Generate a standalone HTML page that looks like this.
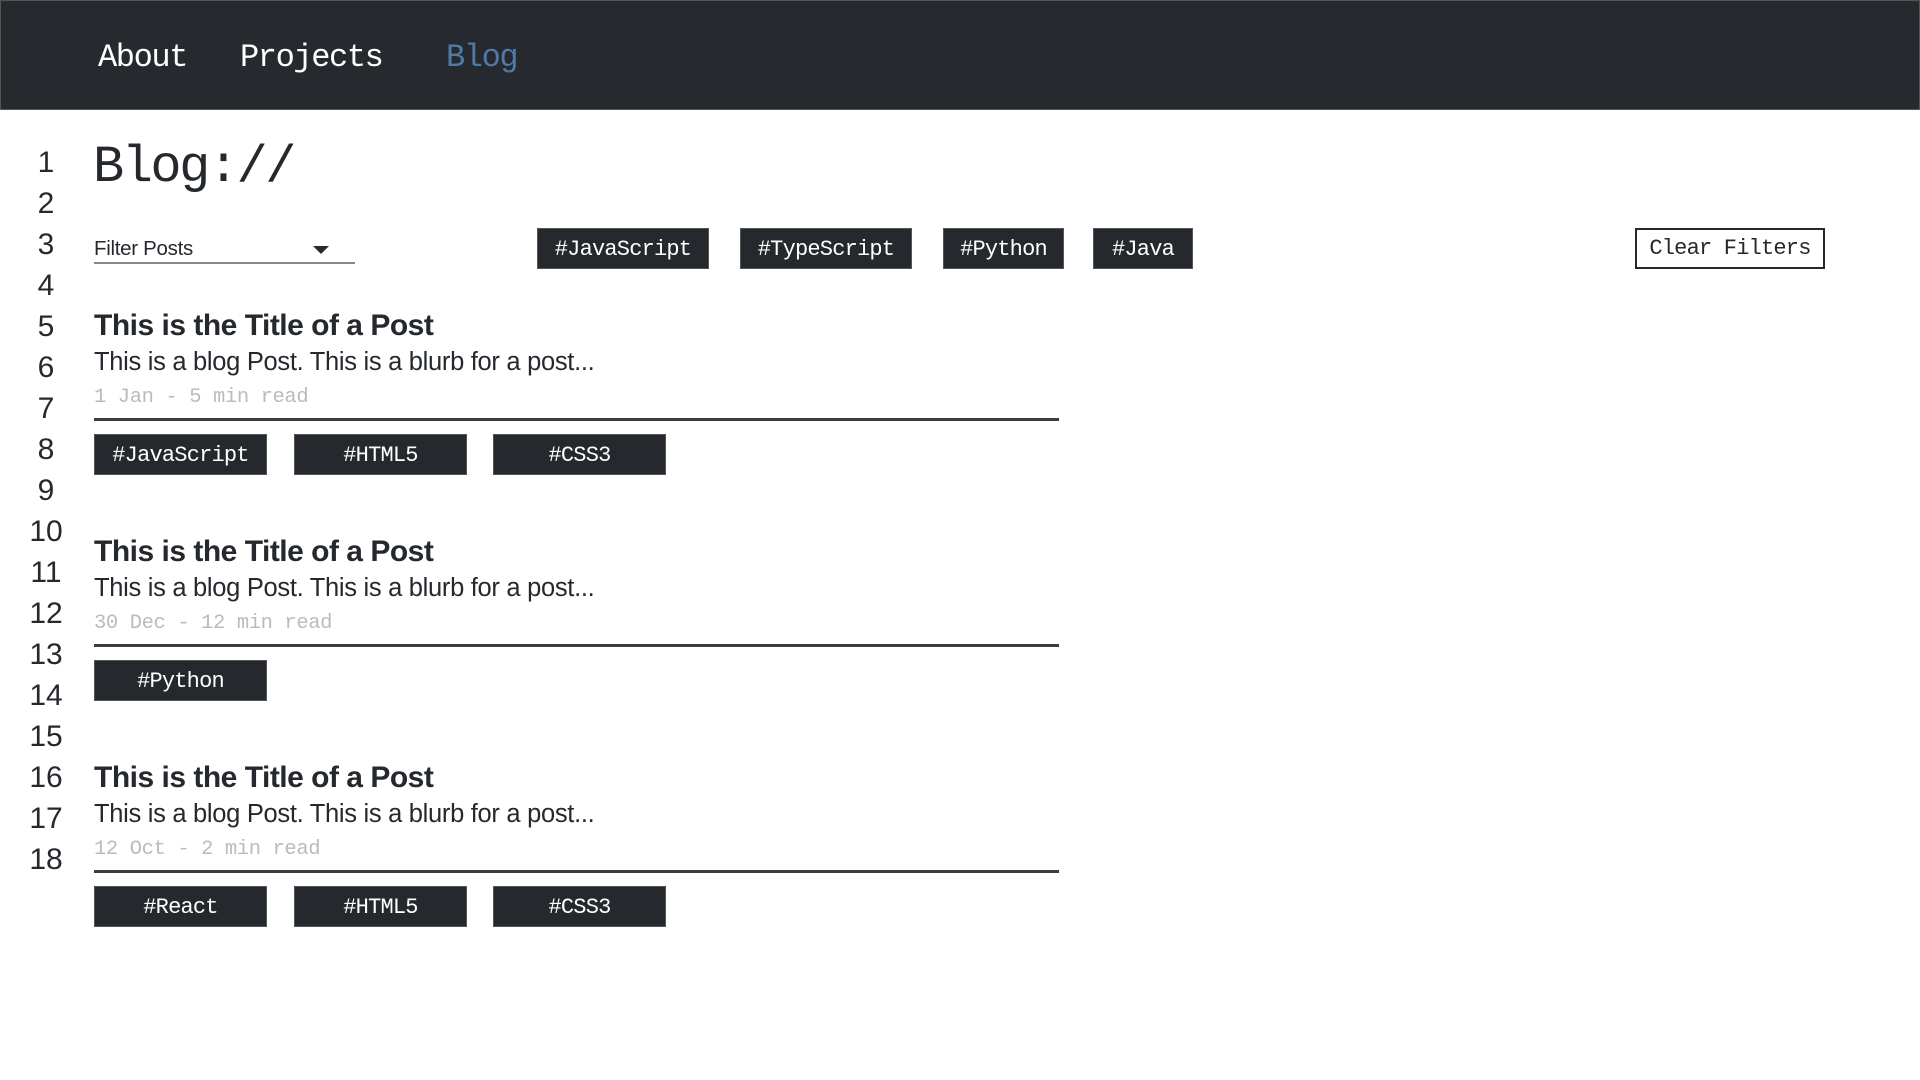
<!DOCTYPE html>
<html><head><meta charset="utf-8"><style>
*{margin:0;padding:0;box-sizing:border-box}
body{width:1920px;height:1080px;background:#fff;position:relative;overflow:hidden;font-family:"Liberation Sans",sans-serif;color:#25292e}
.hdr{position:absolute;left:0;top:0;width:1920px;height:110px;background:#262a2f;border:1px solid #555}
.nav{position:absolute;top:39px;font-family:"Liberation Mono",monospace;font-size:32px;color:#fff;letter-spacing:-1.4px}
.ln{position:absolute;left:22px;width:48px;text-align:center;font-size:30px;color:#25292e}
.mono{font-family:"Liberation Mono",monospace}
.tag{position:absolute;height:41px;background:#25292e;border:1px solid #555;color:#fff;font-family:"Liberation Mono",monospace;font-size:22px;line-height:41px;text-align:center;letter-spacing:-0.8px}
.title{position:absolute;left:94px;font-size:30px;font-weight:bold;letter-spacing:-0.5px;white-space:nowrap}
.blurb{position:absolute;left:94px;font-size:25.5px;letter-spacing:-0.3px;white-space:nowrap}
.meta{position:absolute;left:94px;font-family:"Liberation Mono",monospace;font-size:20.5px;color:#bbb;letter-spacing:-0.4px}
.rule{position:absolute;left:94px;width:965px;height:3px;background:#3a3d42}
</style></head><body>
<div class="hdr"></div>
<div class="nav" style="left:98px">About</div>
<div class="nav" style="left:240px">Projects</div>
<div class="nav" style="left:446px;color:#4f7aa8">Blog</div>

<div class="ln" style="top:146px">1</div>
<div class="ln" style="top:187px">2</div>
<div class="ln" style="top:228px">3</div>
<div class="ln" style="top:269px">4</div>
<div class="ln" style="top:310px">5</div>
<div class="ln" style="top:351px">6</div>
<div class="ln" style="top:392px">7</div>
<div class="ln" style="top:433px">8</div>
<div class="ln" style="top:474px">9</div>
<div class="ln" style="top:515px">10</div>
<div class="ln" style="top:556px">11</div>
<div class="ln" style="top:597px">12</div>
<div class="ln" style="top:638px">13</div>
<div class="ln" style="top:679px">14</div>
<div class="ln" style="top:720px">15</div>
<div class="ln" style="top:761px">16</div>
<div class="ln" style="top:802px">17</div>
<div class="ln" style="top:843px">18</div>

<div class="mono" style="position:absolute;left:93px;top:138px;font-size:52px;letter-spacing:-2.5px">Blog://</div>

<div style="position:absolute;left:94px;top:237px;font-size:20.5px;letter-spacing:-0.3px">Filter Posts</div>
<div style="position:absolute;left:313px;top:246px;width:0;height:0;border-left:8px solid transparent;border-right:8px solid transparent;border-top:8px solid #25292e"></div>
<div style="position:absolute;left:94px;top:262px;width:261px;height:2px;background:#888"></div>

<div class="tag" style="left:537px;top:228px;width:172px">#JavaScript</div>
<div class="tag" style="left:740px;top:228px;width:172px">#TypeScript</div>
<div class="tag" style="left:943px;top:228px;width:121px">#Python</div>
<div class="tag" style="left:1093px;top:228px;width:100px">#Java</div>
<div class="tag" style="left:1635px;top:228px;width:190px;background:#fff;color:#25292e;border:2px solid #25292e;line-height:37px">Clear Filters</div>

<div class="title" style="top:309px">This is the Title of a Post</div>
<div class="blurb" style="top:348px">This is a blog Post. This is a blurb for a post...</div>
<div class="meta" style="top:386px">1 Jan - 5 min read</div>
<div class="rule" style="top:418px"></div>
<div class="tag" style="left:94px;top:434px;width:173px">#JavaScript</div>
<div class="tag" style="left:294px;top:434px;width:173px">#HTML5</div>
<div class="tag" style="left:493px;top:434px;width:173px">#CSS3</div>

<div class="title" style="top:535px">This is the Title of a Post</div>
<div class="blurb" style="top:574px">This is a blog Post. This is a blurb for a post...</div>
<div class="meta" style="top:612px">30 Dec - 12 min read</div>
<div class="rule" style="top:644px"></div>
<div class="tag" style="left:94px;top:660px;width:173px">#Python</div>

<div class="title" style="top:761px">This is the Title of a Post</div>
<div class="blurb" style="top:800px">This is a blog Post. This is a blurb for a post...</div>
<div class="meta" style="top:838px">12 Oct - 2 min read</div>
<div class="rule" style="top:870px"></div>
<div class="tag" style="left:94px;top:886px;width:173px">#React</div>
<div class="tag" style="left:294px;top:886px;width:173px">#HTML5</div>
<div class="tag" style="left:493px;top:886px;width:173px">#CSS3</div>
</body></html>
